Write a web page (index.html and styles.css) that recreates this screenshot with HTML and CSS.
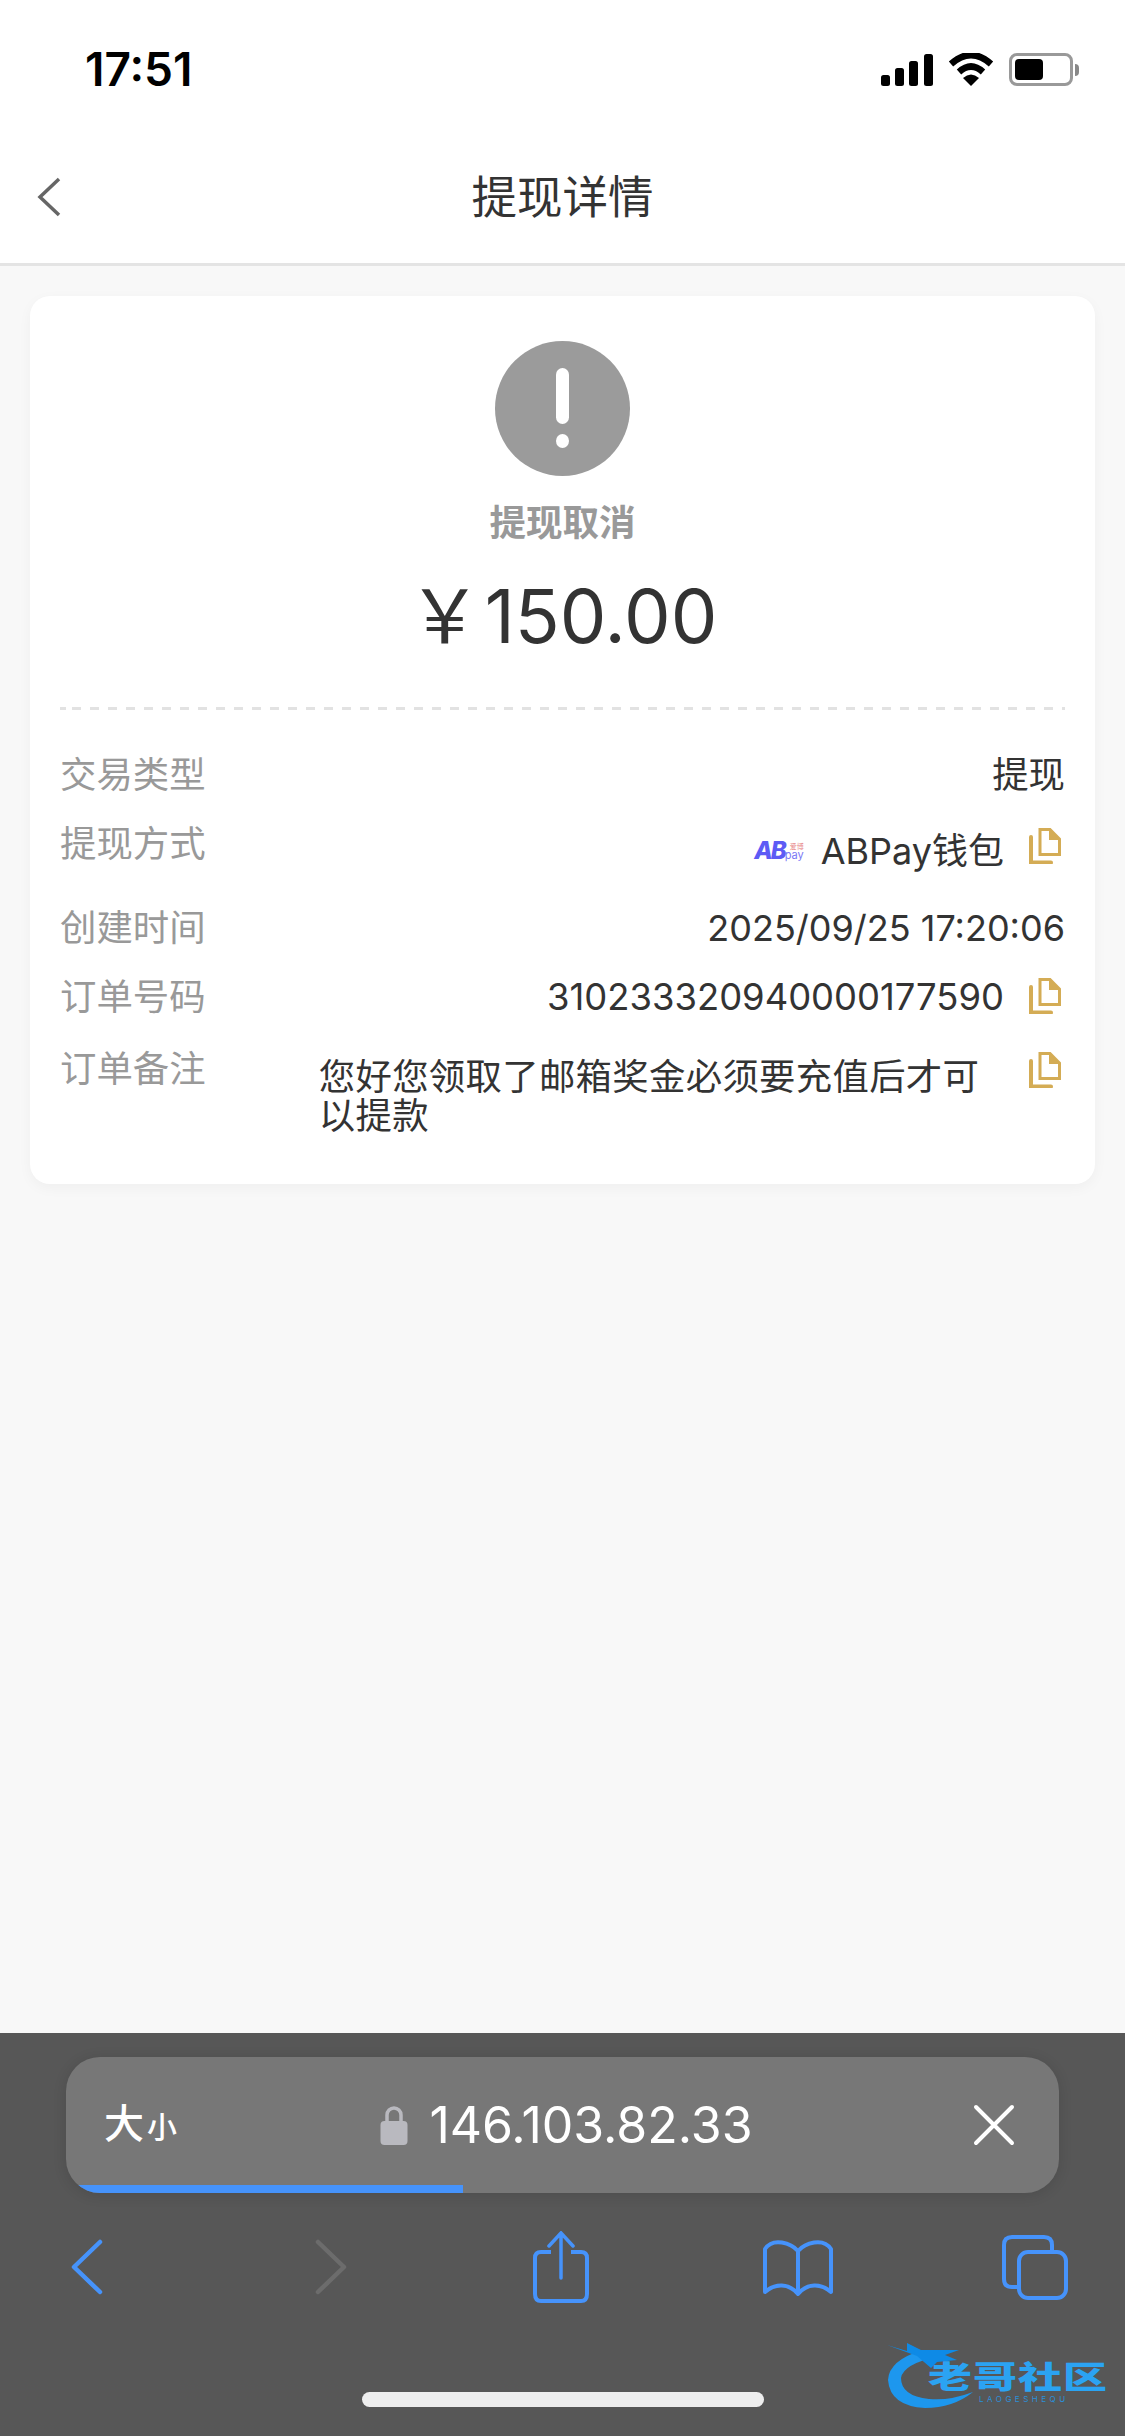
FILE: index.html
```html
<!DOCTYPE html>
<html>
<head>
	<title>提现详情</title>
	<meta charset="utf-8">
	<meta name="viewport" content="width=device-width, initial-scale=1">
	<link rel="stylesheet" href="styles.css">
</head>
<body>
	<div class="page">
		<div class="status-bar">
			<span class="clock">17:51</span>
			<div class="status-icons">
				<svg class="signal" width="52" height="32" viewBox="0 0 52 32"><rect x="0" y="21" width="9" height="11" rx="2.5"/><rect x="14" y="14" width="9" height="18" rx="2.5"/><rect x="28" y="7" width="9" height="25" rx="2.5"/><rect x="43" y="0" width="9" height="32" rx="2.5"/></svg>
				<svg class="wifi" width="46" height="33" viewBox="0 0 46 33"><path d="M3 11 Q23 -7 43 11" fill="none" stroke="#000" stroke-width="6.5"/><path d="M11 19 Q23 8 35 19" fill="none" stroke="#000" stroke-width="6.5"/><path d="M15 25 Q23 18 31 25 L23 33 Z"/></svg>
				<div class="battery"><div class="battery-body"><div class="battery-level"></div></div><div class="battery-cap"></div></div>
			</div>
		</div>

		<div class="nav-bar">
			<svg class="nav-back" width="26" height="40" viewBox="0 0 26 40"><path d="M23 2 L4 20 L23 38" fill="none" stroke="#666" stroke-width="3.5"/></svg>
			<span class="nav-title">提现详情</span>
		</div>

		<div class="content">
			<div class="card">
				<div class="summary">
					<div class="warn-icon"><span class="warn-line"></span><span class="warn-dot"></span></div>
					<p class="summary-state">提现取消</p>
					<p class="summary-amount">￥<span>150.00</span></p>
				</div>
				<div class="dash"></div>
				<div class="rows">
					<div class="row row-type">
						<span class="row-label">交易类型</span>
						<span class="row-value">提现</span>
					</div>
					<div class="row row-way">
						<span class="row-label">提现方式</span>
						<div class="row-value row-way-value">
							<span class="abpay"><i class="abpay-ab">AB</i><span class="abpay-side"><b>爱博</b><em>pay</em></span></span>
							<span class="way-name">ABPay钱包</span>
							<svg class="copy" width="32" height="36" viewBox="0 0 32 36"><path d="M11 1.5 H21 L30.500 11 V26.500 H11 Z" fill="none" stroke="#d4ac55" stroke-width="3"/><path d="M20 1 L31 12 H20 Z" fill="#d4ac55"/><path d="M2 9 V34.500 H22" fill="none" stroke="#d4ac55" stroke-width="4" stroke-linecap="round"/></svg>
						</div>
					</div>
					<div class="row row-time">
						<span class="row-label">创建时间</span>
						<span class="row-value">2025/09/25 17:20:06</span>
					</div>
					<div class="row row-order">
						<span class="row-label">订单号码</span>
						<div class="row-value row-order-value">
							<span>310233320940000177590</span>
							<svg class="copy" width="32" height="36" viewBox="0 0 32 36"><path d="M11 1.5 H21 L30.500 11 V26.500 H11 Z" fill="none" stroke="#d4ac55" stroke-width="3"/><path d="M20 1 L31 12 H20 Z" fill="#d4ac55"/><path d="M2 9 V34.500 H22" fill="none" stroke="#d4ac55" stroke-width="4" stroke-linecap="round"/></svg>
						</div>
					</div>
					<div class="row row-note">
						<span class="row-label">订单备注</span>
						<span class="note-text">您好您领取了邮箱奖金必须要充值后才可以提款</span>
						<svg class="copy" width="32" height="36" viewBox="0 0 32 36"><path d="M11 1.5 H21 L30.500 11 V26.500 H11 Z" fill="none" stroke="#d4ac55" stroke-width="3"/><path d="M20 1 L31 12 H20 Z" fill="#d4ac55"/><path d="M2 9 V34.500 H22" fill="none" stroke="#d4ac55" stroke-width="4" stroke-linecap="round"/></svg>
					</div>
				</div>
			</div>
		</div>

		<div class="browser">
			<div class="url-bar">
				<span class="text-size">大<small>小</small></span>
				<div class="url">
					<svg class="lock" width="28" height="40" viewBox="0 0 28 40"><path d="M7 18 V10 a7 7 0 0 1 14 0 V18" fill="none" stroke="#b9b9bf" stroke-width="3.500"/><rect x="0.500" y="16" width="27" height="24" rx="4" fill="#b9b9bf"/></svg>
					<span>146.103.82.33</span>
				</div>
				<svg class="url-close" width="42" height="42" viewBox="0 0 42 42"><path d="M3 3 L39 39 M39 3 L3 39" stroke="#fff" stroke-width="4" stroke-linecap="round"/></svg>
				<div class="url-progress"></div>
			</div>
			<div class="toolbar">
				<div class="tool"><svg width="32" height="56" viewBox="0 0 32 56"><path d="M29 3 L3 28 L29 53" fill="none" stroke="#4693fb" stroke-width="4.500" stroke-linecap="round" stroke-linejoin="round"/></svg></div>
				<div class="tool tool-next"><svg width="32" height="56" viewBox="0 0 32 56"><path d="M3 3 L29 28 L3 53" fill="none" stroke="#6c6c6c" stroke-width="4.500" stroke-linecap="round" stroke-linejoin="round"/></svg></div>
				<div class="tool"><svg width="56" height="72" viewBox="0 0 56 72"><path d="M18 21 H8 Q2 21 2 27 V63 Q2 70 8 70 H48 Q54 70 54 63 V27 Q54 21 48 21 H38" fill="none" stroke="#4693fb" stroke-width="4"/><path d="M28 47 V3 M16 15 L28 2 L40 15" fill="none" stroke="#4693fb" stroke-width="3.500" stroke-linecap="round"/></svg></div>
				<div class="tool"><svg width="70" height="58" viewBox="0 0 70 58"><path d="M35 13 C28 5 10 -1 2 11 V54 C12 45 26 45 35 56 C44 45 58 45 68 54 V11 C60 -1 42 5 35 13 Z M35 13 V56" fill="none" stroke="#4693fb" stroke-width="4" stroke-linejoin="round"/></svg></div>
				<div class="tool"><svg width="66" height="65" viewBox="0 0 66 65"><path d="M15 52 H10 Q2 52 2 44 V10 Q2 2 10 2 H42 Q50 2 50 10 V15" fill="none" stroke="#4693fb" stroke-width="4"/><rect x="17" y="17" width="47" height="46" rx="9" fill="none" stroke="#4693fb" stroke-width="4"/></svg></div>
			</div>
			<div class="home-bar"></div>
			<div class="watermark">
				<svg class="watermark-dragon" width="90" height="68" viewBox="0 0 90 68"><path d="M36 8 Q2 18 1 38 Q3 64 38 66 Q66 66 86 50 Q62 59 42 57 Q14 54 14 36 Q16 22 52 14 Z" fill="#1d97ee"/><path d="M0 3 L20 9 L20 1 L34 8 L72 8 L58 13 L70 18 L50 20 L44 26 L30 14 Z" fill="#0e8ae6"/></svg>
				<span class="watermark-name">老哥社区</span>
				<span class="watermark-sub">LAOGESHEQU</span>
			</div>
		</div>
	</div>
</body>
</html>
```

FILE: styles.css
```css
* {
	box-sizing: border-box;
}

body {
	margin: 0;
	background: #f8f8f8;
	font-family: Inter, "Noto Sans CJK SC", sans-serif;
	color: #333;
}

p {
	margin: 0;
}

.page {
	width: 1125px;
	height: 2436px;
	display: flex;
	flex-direction: column;
	overflow: hidden;
}

/* status bar */
.status-bar {
	height: 132px;
	background: #fff;
	padding: 47px 46px 0 85px;
	display: flex;
	justify-content: space-between;
	align-items: flex-start;
}

.clock {
	font-size: 46px;
	line-height: 44px;
	font-weight: 600;
	color: #000;
}

.status-icons {
	display: flex;
	align-items: center;
	gap: 15px;
	padding-top: 6px;
}

.battery {
	display: flex;
	align-items: center;
	gap: 2px;
}

.battery-body {
	width: 64px;
	height: 33px;
	border: 3px solid #999;
	border-radius: 8px;
	padding: 3px;
}

.battery-level {
	width: 28px;
	height: 100%;
	background: #000;
	border-radius: 4px;
}

.battery-cap {
	width: 4px;
	height: 12px;
	background: #888;
	border-radius: 0 4px 4px 0;
}

/* nav */
.nav-bar {
	height: 134px;
	background: #fff;
	border-bottom: 3px solid #e4e4e4;
	display: flex;
	align-items: center;
	justify-content: center;
	position: relative;
}

.nav-back {
	position: absolute;
	left: 36px;
	top: 45px;
}

.nav-title {
	font-size: 45.5px;
	line-height: 60px;
	color: #333;
}

/* card */
.content {
	flex: 1;
	padding: 30px 30px 0;
}

.card {
	background: #fff;
	border-radius: 20px;
	box-shadow: 0 4px 14px rgba(0, 0, 0, 0.04);
	padding: 45px 30px 0;
	height: 888px;
}

.summary {
	display: flex;
	flex-direction: column;
	align-items: center;
	height: 366px;
}

.dash {
	height: 3px;
	background:
		linear-gradient(#e2e2e2, #e2e2e2) 0 0 / 6px 3px no-repeat,
		linear-gradient(90deg, #e2e2e2 9px, transparent 9px) 12px 0 / 18px 3px repeat-x;
}

.warn-icon {
	width: 135px;
	height: 135px;
	border-radius: 50%;
	background: #9b9b9b;
	display: flex;
	flex-direction: column;
	align-items: center;
	padding-top: 27px;
	gap: 10px;
}

.warn-line {
	width: 13px;
	height: 56px;
	background: #fff;
	border-radius: 7px;
}

.warn-dot {
	width: 13px;
	height: 14px;
	background: #fff;
	border-radius: 50%;
}

.summary-state {
	margin-top: 22px;
	font-size: 36.5px;
	line-height: 50px;
	font-weight: 700;
	color: #999;
}

.summary-amount {
	margin-top: 23px;
	font-size: 74px;
	line-height: 90px;
	color: #333;
	display: flex;
	align-items: center;
}

.summary-amount span {
	margin-left: 3px;
}

.rows {
	padding-top: 43px;
	font-size: 36.4px;
	line-height: 44px;
}

.row {
	display: flex;
	justify-content: space-between;
	align-items: flex-start;
}

.row-label {
	color: #999;
	flex: none;
}

.row-value {
	color: #333;
	text-align: right;
}

.row-way {
	margin-top: 25px;
	height: 59px;
}

.row-time {
	margin-top: 25px;
}

.row-time .row-value {
	font-size: 36px;
}

.row-order {
	margin-top: 25px;
}

.row-note {
	margin-top: 28px;
}

.row-way-value,
.row-order-value {
	display: flex;
	align-items: center;
	gap: 25px;
}

.row-way-value {
	padding-top: 7px;
}

.row-way-value .copy {
	margin: -11px 4px 0 0;
}

.row-order-value .copy {
	margin: -3px 4px 0 0;
}

.row-note .copy {
	margin: 5px 4px 0 0;
	flex: none;
}

.note-text {
	flex: none;
	width: 670px;
	margin: 11px 0 0 73px;
	line-height: 38.5px;
	letter-spacing: 0.3px;
	color: #333;
}

.way-name {
	font-size: 36px;
}

/* abpay logo */
.abpay {
	display: flex;
	align-items: flex-end;
	margin-right: -8px;
	height: 20px;
}

.abpay-ab {
	font-size: 24px;
	line-height: 20px;
	font-weight: 800;
	color: #5d5bf5;
	letter-spacing: -2px;
}

.abpay-side {
	display: flex;
	flex-direction: column;
	line-height: 1;
}

.abpay-side b {
	font-size: 7px;
	font-weight: 400;
	color: #e88a8a;
}

.abpay-side em {
	font-style: normal;
	font-size: 11px;
	color: #7a78f5;
}

/* browser chrome */
.browser {
	height: 403px;
	background: #575757;
	position: relative;
	padding-top: 24px;
}

.url-bar {
	width: 993px;
	height: 136px;
	margin-left: 66px;
	background: #777;
	border-radius: 34px;
	box-shadow: 0 2px 14px rgba(0, 0, 0, 0.12);
	display: flex;
	align-items: center;
	justify-content: space-between;
	padding: 0 44px 0 38px;
	color: #fff;
	position: relative;
	overflow: hidden;
}

.text-size {
	font-size: 40px;
	line-height: 50px;
	font-weight: 500;
	width: 120px;
}

.text-size small {
	font-size: 30px;
	margin-left: 3px;
}

.url {
	display: flex;
	align-items: center;
	gap: 21px;
	font-size: 50px;
	line-height: 60px;
	margin-right: 64px;
}

.url-progress {
	position: absolute;
	left: 0;
	bottom: 0;
	width: 397px;
	height: 8px;
	background: #4693fb;
}

.toolbar {
	height: 128px;
	padding: 20px 40px 0 37px;
	display: flex;
	justify-content: space-between;
	align-items: center;
}

.tool {
	width: 100px;
	display: flex;
	justify-content: center;
}

.tool-next {
	padding-left: 14px;
}

.home-bar {
	position: absolute;
	left: 362px;
	top: 359px;
	width: 402px;
	height: 15px;
	background: #eee;
	border-radius: 8px;
}

.watermark {
	position: absolute;
	left: 887px;
	top: 309px;
	width: 230px;
	height: 70px;
}

.watermark-dragon {
	position: absolute;
	left: 0;
	top: 0;
}

.watermark-name {
	position: absolute;
	left: 41px;
	top: 20px;
	font-size: 44px;
	line-height: 31px;
	font-weight: 900;
	letter-spacing: 1px;
	white-space: nowrap;
	color: #2ba3f2;
	transform: scaleY(0.7);
}

.watermark-sub {
	position: absolute;
	left: 92px;
	top: 52px;
	font-size: 8px;
	line-height: 10px;
	letter-spacing: 3.5px;
	color: #2b8fd8;
}
```
